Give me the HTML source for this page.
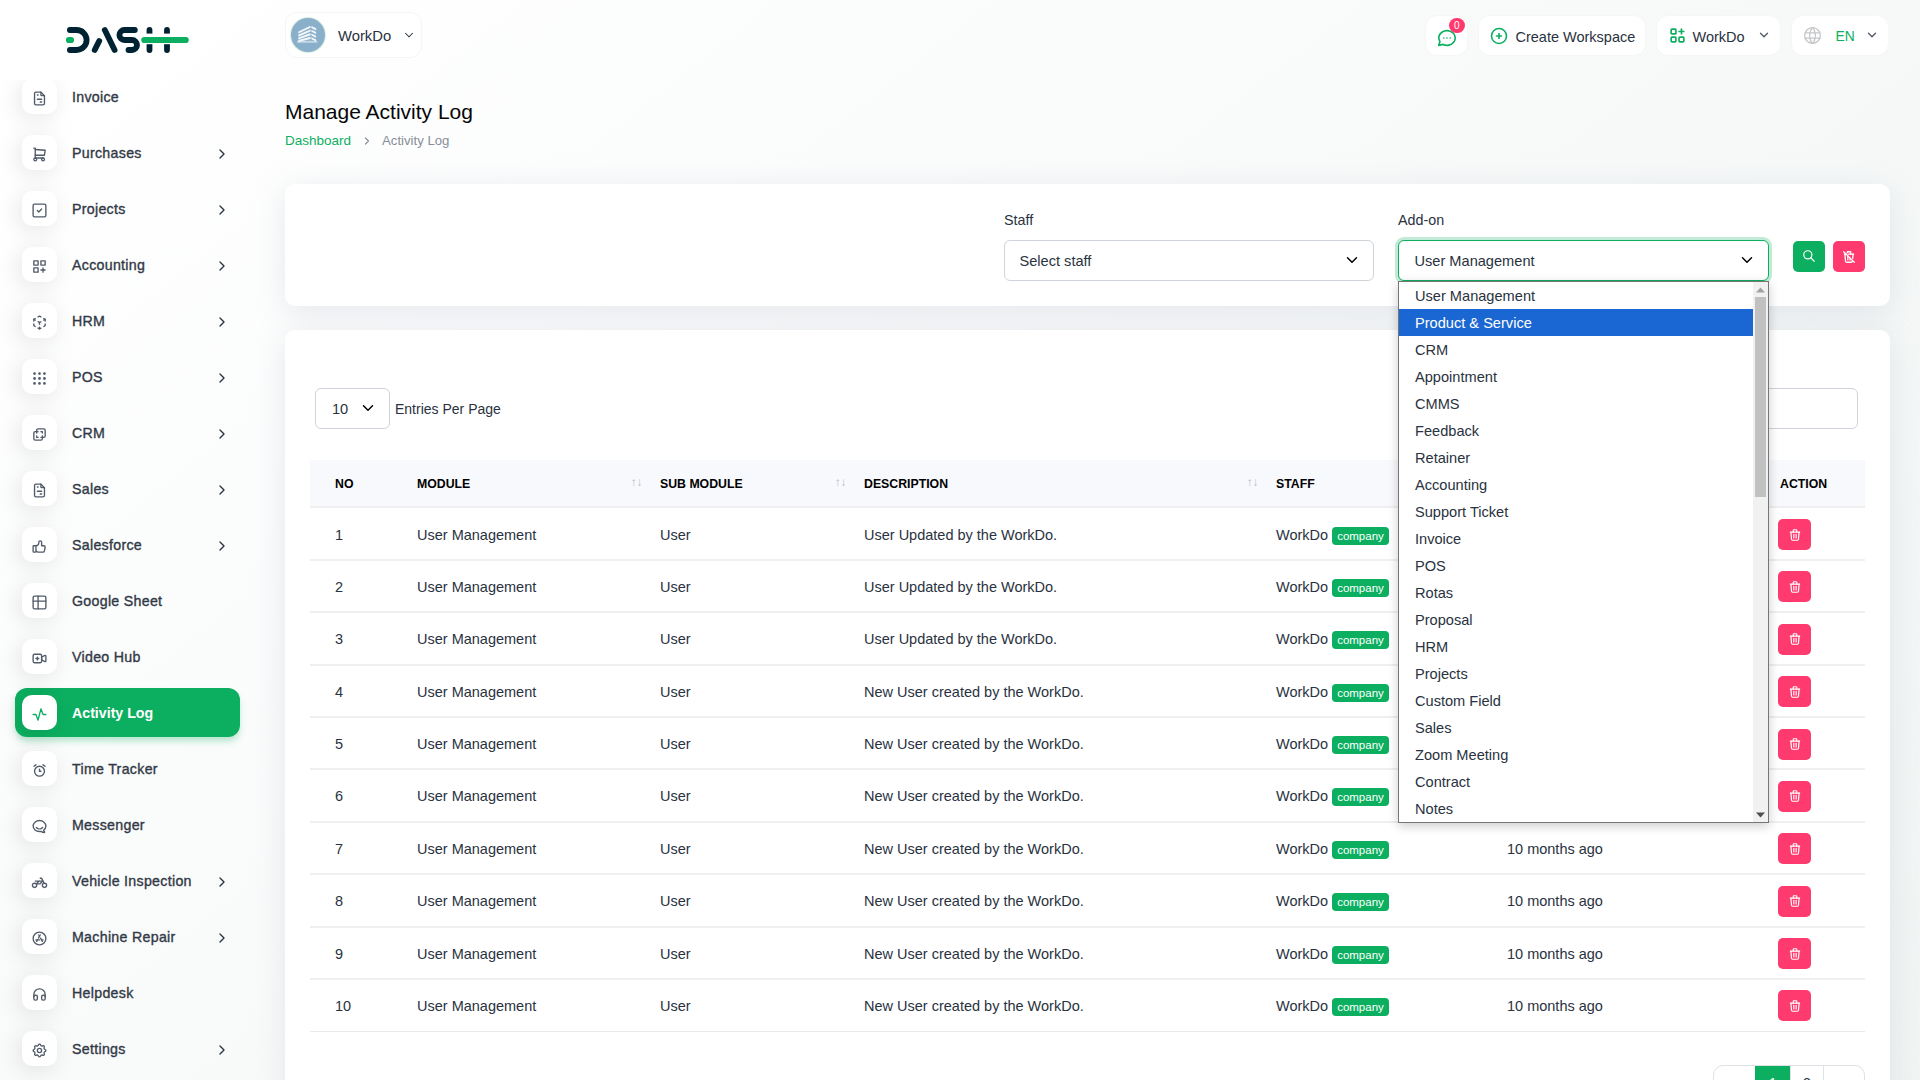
<!DOCTYPE html>
<html><head><meta charset="utf-8"><style>
*{box-sizing:border-box;margin:0;padding:0}
html,body{width:1920px;height:1080px;overflow:hidden}
body{font-family:"Liberation Sans",sans-serif;color:#293240;position:relative;
 background:linear-gradient(141.55deg,rgba(240,244,243,0) 3.46%,#f0f4f3 99.86%),#fff}
.abs{position:absolute}
.side{position:absolute;left:0;top:80px;width:260px;height:1000px;overflow:hidden}
.side .inner{position:absolute;left:0;top:-80px;width:260px;height:1100px}
.micon{position:absolute;left:22px;width:35px;height:35px;background:#fff;border-radius:10px;box-shadow:-3px 4px 23px rgba(0,0,0,0.1);display:flex;align-items:center;justify-content:center;z-index:2;padding-top:3px}
.mtext{position:absolute;left:72px;height:35px;line-height:37px;font-size:14.2px;font-weight:400;letter-spacing:0.3px;-webkit-text-stroke:0.35px #323946;color:#323946;white-space:nowrap;z-index:2}
.act{position:absolute;left:15px;width:225px;height:49px;background:#0CAF60;border-radius:12px;box-shadow:0 5px 7px -1px rgba(12,175,96,0.3)}
.act-t{color:#fff;-webkit-text-stroke:0;font-weight:700;letter-spacing:0}
.chev{position:absolute;left:214px;z-index:2;height:16px}
.hbtn{position:absolute;top:14.5px;height:41px;background:#fff;border-radius:12px;border:1px solid #f5f6f6;white-space:nowrap;font-size:14.5px}
.card{position:absolute;left:285px;width:1605px;background:#fff;border-radius:10px;box-shadow:0 6px 30px rgba(182,186,203,0.3)}
.lbl{position:absolute;font-size:14.3px;color:#293240;margin-top:0.5px}
.sel{position:absolute;height:41px;border:1px solid #ced4da;border-radius:6px;background:#fff;font-size:14.6px}
.thead{position:absolute;left:25px;top:130px;width:1555px;height:48px;background:#f8f9fd;border-bottom:2px solid #efefef}
.th{position:absolute;top:1px;line-height:47px;font-size:12.3px;font-weight:700;color:#000;white-space:nowrap}
.sort{position:absolute;top:16px;font-size:11.5px;color:#b4b8bd;letter-spacing:0px}
.row{position:absolute;left:310px;width:1555px;height:52.38px;border-bottom:2px solid #efefef}
.row.last{border-bottom:1px solid #ebebeb}
.row .c{position:absolute;top:1px;line-height:51px;font-size:14.5px;white-space:nowrap;color:#293240}
.badge{display:inline-block;background:#0CAF60;color:#fff;font-size:11.5px;line-height:18px;height:18px;padding:0 5px;border-radius:4px;vertical-align:0px;position:relative;top:0px}
.del{position:absolute;left:1468px;top:10.5px;width:33px;height:31px;background:#FF3A6E;border-radius:5px;display:flex;align-items:center;justify-content:center}
.dd{position:absolute;left:1398px;top:281px;width:371px;height:542px;background:#fff;border:1px solid #767676;box-shadow:0 3px 10px rgba(0,0,0,0.2);z-index:20;overflow:hidden}
.opt{position:absolute;left:0;width:354px;height:27px;line-height:29px;padding-left:16px;font-size:14.6px;color:#293240;white-space:nowrap}
.opt.hl{background:#1a66d2;color:#fff;border:0;border-radius:0}
.sb{position:absolute;right:0;top:0;width:15px;height:540px;background:#f1f1f1}
.thumb{position:absolute;left:2px;top:15px;width:11px;height:200px;background:#c1c1c1}
</style></head><body>
<svg width="140" height="50" viewBox="60 15 140 50" style="position:absolute;left:60px;top:15px">
<g fill="none" stroke="#002333" stroke-width="5.8" stroke-linecap="round">
<path d="M69.9 30H76.6A10 10 0 0 1 76.6 50H69.9"/>
<path d="M94.7 50L99.2 41"/><path d="M104.8 30L114.6 50"/>
<path d="M134.8 30H124.4A5 5 0 0 0 124.4 40H132A5 5 0 0 1 132 50H128.5"/>
<path d="M149.5 30V50"/><path d="M167 30V50"/>
</g>
<rect x="144" y="33.6" width="28" height="10.6" fill="#fff"/>
<g stroke="#0CAF60" stroke-width="6.2" stroke-linecap="round"><path d="M69 40H71"/><path d="M144.3 40H185.7"/></g>
</svg>
<div class="side"><div class="inner">
<div class="micon" style="top:79.2px"><svg width="17" height="17" viewBox="0 0 24 24" fill="none" stroke="#525b69" stroke-width="1.9" stroke-linecap="round" stroke-linejoin="round" ><path d="M14 3v4a1 1 0 0 0 1 1h4"/><path d="M17 21h-10a2 2 0 0 1 -2 -2v-14a2 2 0 0 1 2 -2h7l5 5v11a2 2 0 0 1 -2 2z"/><path d="M9 7l1 0"/><path d="M9 13l6 0"/><path d="M13 17l2 0"/></svg></div>
<div class="mtext" style="top:79.2px">Invoice</div>
<div class="micon" style="top:135.2px"><svg width="17" height="17" viewBox="0 0 24 24" fill="none" stroke="#525b69" stroke-width="1.9" stroke-linecap="round" stroke-linejoin="round" ><path d="M6 19m-2 0a2 2 0 1 0 4 0a2 2 0 1 0 -4 0"/><path d="M17 19m-2 0a2 2 0 1 0 4 0a2 2 0 1 0 -4 0"/><path d="M17 17h-11v-14h-2"/><path d="M6 5l14 1l-1 7h-13"/></svg></div>
<div class="mtext" style="top:135.2px">Purchases</div>
<div class="chev" style="top:145.7px"><svg width="16" height="16" viewBox="0 0 24 24" fill="none" stroke="#293240" stroke-width="2" stroke-linecap="round" stroke-linejoin="round"><path d="M9 6l6 6l-6 6"/></svg></div>
<div class="micon" style="top:191.2px"><svg width="17" height="17" viewBox="0 0 24 24" fill="none" stroke="#525b69" stroke-width="1.9" stroke-linecap="round" stroke-linejoin="round" ><path d="M3 5a2 2 0 0 1 2 -2h14a2 2 0 0 1 2 2v14a2 2 0 0 1 -2 2h-14a2 2 0 0 1 -2 -2z"/><path d="M9 12l2 2l4 -4"/></svg></div>
<div class="mtext" style="top:191.2px">Projects</div>
<div class="chev" style="top:201.7px"><svg width="16" height="16" viewBox="0 0 24 24" fill="none" stroke="#293240" stroke-width="2" stroke-linecap="round" stroke-linejoin="round"><path d="M9 6l6 6l-6 6"/></svg></div>
<div class="micon" style="top:247.2px"><svg width="17" height="17" viewBox="0 0 24 24" fill="none" stroke="#525b69" stroke-width="1.9" stroke-linecap="round" stroke-linejoin="round" ><path d="M4 4h6v6h-6z"/><path d="M14 4h6v6h-6z"/><path d="M4 14h6v6h-6z"/><path d="M14 17h6m-3 -3v6"/></svg></div>
<div class="mtext" style="top:247.2px">Accounting</div>
<div class="chev" style="top:257.7px"><svg width="16" height="16" viewBox="0 0 24 24" fill="none" stroke="#293240" stroke-width="2" stroke-linecap="round" stroke-linejoin="round"><path d="M9 6l6 6l-6 6"/></svg></div>
<div class="micon" style="top:303.2px"><svg width="17" height="17" viewBox="0 0 24 24" fill="none" stroke="#525b69" stroke-width="1.9" stroke-linecap="round" stroke-linejoin="round" ><path d="M6 17.6l-2 -1.1v-2.5"/><path d="M4 10v-2.5l2 -1.1"/><path d="M10 4.1l2 -1.1l2 1.1"/><path d="M18 6.4l2 1.1v2.5"/><path d="M20 14v2.5l-2 1.12"/><path d="M14 19.9l-2 1.1l-2 -1.1"/><path d="M12 12l2 -1.1"/><path d="M18 8.6l2 -1.1"/><path d="M12 12l0 2.5"/><path d="M12 18.5l0 2.5"/><path d="M12 12l-2 -1.12"/><path d="M6 8.6l-2 -1.1"/></svg></div>
<div class="mtext" style="top:303.2px">HRM</div>
<div class="chev" style="top:313.7px"><svg width="16" height="16" viewBox="0 0 24 24" fill="none" stroke="#293240" stroke-width="2" stroke-linecap="round" stroke-linejoin="round"><path d="M9 6l6 6l-6 6"/></svg></div>
<div class="micon" style="top:359.2px"><svg width="17" height="17" viewBox="0 0 24 24" fill="none" stroke="#525b69" stroke-width="1.9" stroke-linecap="round" stroke-linejoin="round" ><circle cx="5" cy="5" r="1"/><circle cx="12" cy="5" r="1"/><circle cx="19" cy="5" r="1"/><circle cx="5" cy="12" r="1"/><circle cx="12" cy="12" r="1"/><circle cx="19" cy="12" r="1"/><circle cx="5" cy="19" r="1"/><circle cx="12" cy="19" r="1"/><circle cx="19" cy="19" r="1"/></svg></div>
<div class="mtext" style="top:359.2px">POS</div>
<div class="chev" style="top:369.7px"><svg width="16" height="16" viewBox="0 0 24 24" fill="none" stroke="#293240" stroke-width="2" stroke-linecap="round" stroke-linejoin="round"><path d="M9 6l6 6l-6 6"/></svg></div>
<div class="micon" style="top:415.2px"><svg width="17" height="17" viewBox="0 0 24 24" fill="none" stroke="#525b69" stroke-width="1.9" stroke-linecap="round" stroke-linejoin="round" ><path d="M16 16v2a2 2 0 0 1 -2 2h-8a2 2 0 0 1 -2 -2v-8a2 2 0 0 1 2 -2h2v-2a2 2 0 0 1 2 -2h8a2 2 0 0 1 2 2v8a2 2 0 0 1 -2 2h-2"/><path d="M10 8l-2 0l0 2"/><path d="M8 14l0 2l2 0"/><path d="M14 8l2 0l0 2"/><path d="M16 14l0 2l-2 0"/></svg></div>
<div class="mtext" style="top:415.2px">CRM</div>
<div class="chev" style="top:425.7px"><svg width="16" height="16" viewBox="0 0 24 24" fill="none" stroke="#293240" stroke-width="2" stroke-linecap="round" stroke-linejoin="round"><path d="M9 6l6 6l-6 6"/></svg></div>
<div class="micon" style="top:471.2px"><svg width="17" height="17" viewBox="0 0 24 24" fill="none" stroke="#525b69" stroke-width="1.9" stroke-linecap="round" stroke-linejoin="round" ><path d="M14 3v4a1 1 0 0 0 1 1h4"/><path d="M17 21h-10a2 2 0 0 1 -2 -2v-14a2 2 0 0 1 2 -2h7l5 5v11a2 2 0 0 1 -2 2z"/><path d="M9 7l1 0"/><path d="M9 13l6 0"/><path d="M13 17l2 0"/></svg></div>
<div class="mtext" style="top:471.2px">Sales</div>
<div class="chev" style="top:481.7px"><svg width="16" height="16" viewBox="0 0 24 24" fill="none" stroke="#293240" stroke-width="2" stroke-linecap="round" stroke-linejoin="round"><path d="M9 6l6 6l-6 6"/></svg></div>
<div class="micon" style="top:527.2px"><svg width="17" height="17" viewBox="0 0 24 24" fill="none" stroke="#525b69" stroke-width="1.9" stroke-linecap="round" stroke-linejoin="round" ><path d="M7 11v8a1 1 0 0 1 -1 1h-2a1 1 0 0 1 -1 -1v-7a1 1 0 0 1 1 -1h3a4 4 0 0 0 4 -4v-1a2 2 0 0 1 4 0v5h3a2 2 0 0 1 2 2l-1 5a2 3 0 0 1 -2 2h-7a3 3 0 0 1 -3 -3"/></svg></div>
<div class="mtext" style="top:527.2px">Salesforce</div>
<div class="chev" style="top:537.7px"><svg width="16" height="16" viewBox="0 0 24 24" fill="none" stroke="#293240" stroke-width="2" stroke-linecap="round" stroke-linejoin="round"><path d="M9 6l6 6l-6 6"/></svg></div>
<div class="micon" style="top:583.2px"><svg width="17" height="17" viewBox="0 0 24 24" fill="none" stroke="#525b69" stroke-width="1.9" stroke-linecap="round" stroke-linejoin="round" ><path d="M3 5a2 2 0 0 1 2 -2h14a2 2 0 0 1 2 2v14a2 2 0 0 1 -2 2h-14a2 2 0 0 1 -2 -2v-14z"/><path d="M3 10h18"/><path d="M10 3v18"/></svg></div>
<div class="mtext" style="top:583.2px">Google Sheet</div>
<div class="micon" style="top:639.2px"><svg width="17" height="17" viewBox="0 0 24 24" fill="none" stroke="#525b69" stroke-width="1.9" stroke-linecap="round" stroke-linejoin="round" ><path d="M15 10l4.553 -2.276a1 1 0 0 1 1.447 .894v6.764a1 1 0 0 1 -1.447 .894l-4.553 -2.276v-4z"/><path d="M3 8a2 2 0 0 1 2 -2h8a2 2 0 0 1 2 2v8a2 2 0 0 1 -2 2h-8a2 2 0 0 1 -2 -2z"/><path d="M7 12l4 0"/><path d="M9 10l0 4"/></svg></div>
<div class="mtext" style="top:639.2px">Video Hub</div>
<div class="act" style="top:688.0px"></div>
<div class="micon" style="top:695.2px"><svg width="17" height="17" viewBox="0 0 24 24" fill="none" stroke="#0CAF60" stroke-width="1.9" stroke-linecap="round" stroke-linejoin="round" ><path d="M3 12h4l3 8l4 -16l3 8h4"/></svg></div>
<div class="mtext act-t" style="top:695.2px">Activity Log</div>
<div class="micon" style="top:751.2px"><svg width="17" height="17" viewBox="0 0 24 24" fill="none" stroke="#525b69" stroke-width="1.9" stroke-linecap="round" stroke-linejoin="round" ><path d="M12 13m-7 0a7 7 0 1 0 14 0a7 7 0 1 0 -14 0"/><path d="M12 10l0 3l2 0"/><path d="M7 4l-2.75 2"/><path d="M17 4l2.75 2"/></svg></div>
<div class="mtext" style="top:751.2px">Time Tracker</div>
<div class="micon" style="top:807.2px"><svg width="17" height="17" viewBox="0 0 24 24" fill="none" stroke="#525b69" stroke-width="1.9" stroke-linecap="round" stroke-linejoin="round" ><path d="M17.802 17.292s.077 -.055 .2 -.149c1.843 -1.425 3 -3.49 3 -5.789c0 -4.286 -4.03 -7.764 -9 -7.764c-4.97 0 -9 3.478 -9 7.764c0 4.288 4.03 7.646 9 7.646c.424 0 1.12 -.028 2.088 -.084c1.262 .82 3.104 1.493 4.716 1.493c.499 0 .734 -.41 .414 -.828c-.486 -.596 -1.156 -1.551 -1.416 -2.29z"/><path d="M7.5 13.5c2.5 2.5 6.5 2.5 9 0"/></svg></div>
<div class="mtext" style="top:807.2px">Messenger</div>
<div class="micon" style="top:863.2px"><svg width="17" height="17" viewBox="0 0 24 24" fill="none" stroke="#525b69" stroke-width="1.9" stroke-linecap="round" stroke-linejoin="round" ><path d="M5 16m-3 0a3 3 0 1 0 6 0a3 3 0 1 0 -6 0"/><path d="M19 16m-3 0a3 3 0 1 0 6 0a3 3 0 1 0 -6 0"/><path d="M7.5 14h5l4 -4h-10.5m1.5 4l4 -4"/><path d="M13 6h2l1.5 3l2 4"/></svg></div>
<div class="mtext" style="top:863.2px">Vehicle Inspection</div>
<div class="chev" style="top:873.7px"><svg width="16" height="16" viewBox="0 0 24 24" fill="none" stroke="#293240" stroke-width="2" stroke-linecap="round" stroke-linejoin="round"><path d="M9 6l6 6l-6 6"/></svg></div>
<div class="micon" style="top:919.2px"><svg width="17" height="17" viewBox="0 0 24 24" fill="none" stroke="#525b69" stroke-width="1.9" stroke-linecap="round" stroke-linejoin="round" ><path d="M12 12m-9 0a9 9 0 1 0 18 0a9 9 0 1 0 -18 0"/><path d="M8 16l1.106 -1.99m1.4 -2.522l2.494 -4.488"/><path d="M7 14h5m2.9 0h2.1"/><path d="M16 16l-2.51 -4.518m-1.487 -2.677l-1 -1.805"/></svg></div>
<div class="mtext" style="top:919.2px">Machine Repair</div>
<div class="chev" style="top:929.7px"><svg width="16" height="16" viewBox="0 0 24 24" fill="none" stroke="#293240" stroke-width="2" stroke-linecap="round" stroke-linejoin="round"><path d="M9 6l6 6l-6 6"/></svg></div>
<div class="micon" style="top:975.2px"><svg width="17" height="17" viewBox="0 0 24 24" fill="none" stroke="#525b69" stroke-width="1.9" stroke-linecap="round" stroke-linejoin="round" ><path d="M4 15a2 2 0 0 1 2 -2h1a2 2 0 0 1 2 2v3a2 2 0 0 1 -2 2h-1a2 2 0 0 1 -2 -2z"/><path d="M15 15a2 2 0 0 1 2 -2h1a2 2 0 0 1 2 2v3a2 2 0 0 1 -2 2h-1a2 2 0 0 1 -2 -2z"/><path d="M4 15v-3a8 8 0 0 1 16 0v3"/></svg></div>
<div class="mtext" style="top:975.2px">Helpdesk</div>
<div class="micon" style="top:1031.2px"><svg width="17" height="17" viewBox="0 0 24 24" fill="none" stroke="#525b69" stroke-width="1.9" stroke-linecap="round" stroke-linejoin="round" ><path d="M10.325 4.317c.426 -1.756 2.924 -1.756 3.35 0a1.724 1.724 0 0 0 2.573 1.066c1.543 -.94 3.31 .826 2.37 2.37a1.724 1.724 0 0 0 1.065 2.572c1.756 .426 1.756 2.924 0 3.35a1.724 1.724 0 0 0 -1.066 2.573c.94 1.543 -.826 3.31 -2.37 2.37a1.724 1.724 0 0 0 -2.572 1.065c-.426 1.756 -2.924 1.756 -3.35 0a1.724 1.724 0 0 0 -2.573 -1.066c-1.543 .94 -3.31 -.826 -2.37 -2.37a1.724 1.724 0 0 0 -1.065 -2.572c-1.756 -.426 -1.756 -2.924 0 -3.35a1.724 1.724 0 0 0 1.066 -2.573c-.94 -1.543 .826 -3.31 2.37 -2.37c1 .608 2.296 .07 2.572 -1.065z"/><path d="M9 12a3 3 0 1 0 6 0a3 3 0 0 0 -6 0"/></svg></div>
<div class="mtext" style="top:1031.2px">Settings</div>
<div class="chev" style="top:1041.7px"><svg width="16" height="16" viewBox="0 0 24 24" fill="none" stroke="#293240" stroke-width="2" stroke-linecap="round" stroke-linejoin="round"><path d="M9 6l6 6l-6 6"/></svg></div>
</div></div>

<!-- header -->
<div class="hbtn" style="left:285px;top:12px;width:137px;height:46px">
 <div class="abs" style="left:5px;top:5px;width:34px;height:34px;border-radius:50%;background:#8aafcb;box-shadow:0 0 0 1px #d8f0e2"><svg class="abs" style="left:0;top:0" width="34" height="34" viewBox="0 0 34 34"><g fill="#f4f7fa"><path d="M7.4 13.5L19.5 7.7L19.5 9.8L7.4 15.6z"/><path d="M20.4 8.0L25.1 10.3L25.1 12.4L20.4 10.100000000000001z"/><path d="M7.4 16.6L19.5 11.4L19.5 13.5L7.4 18.700000000000003z"/><path d="M20.4 11.700000000000001L25.1 14.0L25.1 16.1L20.4 13.8z"/><path d="M7.4 19.5L19.5 15.1L19.5 17.2L7.4 21.6z"/><path d="M20.4 15.4L25.1 17.7L25.1 19.8L20.4 17.5z"/><path d="M7.4 22.0L19.5 18.8L19.5 20.900000000000002L7.4 24.1z"/><path d="M20.4 19.1L25.1 21.400000000000002L25.1 23.500000000000004L20.4 21.200000000000003z"/><rect x="6" y="22.8" width="20.3" height="2" opacity=".55"/></g></svg></div>
 <div class="abs" style="left:52px;top:1px;line-height:44px;font-size:14.8px;color:#293240">WorkDo</div>
 <div class="abs" style="left:116px;top:15px"><svg width="14" height="14" viewBox="0 0 24 24" fill="none" stroke="#293240" stroke-width="1.8" stroke-linecap="round"><path d="M6 9l6 6l6 -6"/></svg></div>
</div>
<div class="hbtn" style="left:1425px;width:43px">
 <svg class="abs" style="left:10px;top:11.5px" width="22" height="22" viewBox="0 0 24 24" fill="none" stroke="#0CAF60" stroke-width="1.8" stroke-linecap="round" stroke-linejoin="round"><path d="M3 20l1.3 -3.9c-2.324 -3.437 -1.426 -7.872 2.1 -10.374c3.526 -2.501 8.59 -2.296 11.845 .48c3.255 2.777 3.695 7.266 1.029 10.501c-2.666 3.235 -7.615 4.215 -11.574 2.293l-4.7 1"/><path d="M8.5 12h.01"/><path d="M12 12h.01"/><path d="M15.5 12h.01"/></svg>
 <div class="abs" style="left:23px;top:2px;width:15.5px;height:15.5px;border-radius:50%;background:#FF3A6E;color:#fff;font-size:10px;line-height:15px;text-align:center">0</div>
</div>
<div class="hbtn" style="left:1478px;width:168px">
 <svg class="abs" style="left:10px;top:10px" width="20" height="20" viewBox="0 0 24 24" fill="none" stroke="#0CAF60" stroke-width="1.9" stroke-linecap="round" stroke-linejoin="round"><path d="M3 12a9 9 0 1 0 18 0a9 9 0 0 0 -18 0"/><path d="M9 12h6"/><path d="M12 9v6"/></svg>
 <div class="abs" style="left:36.5px;top:2px;line-height:39px;color:#293240">Create Workspace</div></div>
<div class="hbtn" style="left:1656px;width:125px">
 <svg class="abs" style="left:10.5px;top:10.5px" width="19" height="19" viewBox="0 0 24 24" fill="none" stroke="#0CAF60" stroke-width="2.1" stroke-linecap="round" stroke-linejoin="round"><path d="M4 5a1 1 0 0 1 1 -1h4a1 1 0 0 1 1 1v4a1 1 0 0 1 -1 1h-4a1 1 0 0 1 -1 -1z"/><path d="M4 15a1 1 0 0 1 1 -1h4a1 1 0 0 1 1 1v4a1 1 0 0 1 -1 1h-4a1 1 0 0 1 -1 -1z"/><path d="M14 15a1 1 0 0 1 1 -1h4a1 1 0 0 1 1 1v4a1 1 0 0 1 -1 1h-4a1 1 0 0 1 -1 -1z"/><path d="M14 7l6 0"/><path d="M17 4l0 6"/></svg>
 <div class="abs" style="left:35.5px;top:2px;line-height:39px;color:#293240">WorkDo</div>
 <svg class="abs" style="left:99.5px;top:12.5px" width="14" height="14" viewBox="0 0 24 24" fill="none" stroke="#525b69" stroke-width="2.3" stroke-linecap="round"><path d="M6 9l6 6l6 -6"/></svg>
</div>
<div class="hbtn" style="left:1791px;width:98px">
 <svg class="abs" style="left:9.5px;top:9px" width="21" height="21" viewBox="0 0 24 24" fill="none" stroke="#c4c6c8" stroke-width="1.5" stroke-linecap="round" stroke-linejoin="round"><path d="M3 12a9 9 0 1 0 18 0a9 9 0 0 0 -18 0"/><path d="M3.6 9h16.8"/><path d="M3.6 15h16.8"/><path d="M11.5 3a17 17 0 0 0 0 18"/><path d="M12.5 3a17 17 0 0 1 0 18"/></svg>
 <div class="abs" style="left:43.5px;top:1.6px;line-height:39px;color:#0CAF60;font-size:13.8px">EN</div>
 <svg class="abs" style="left:72.5px;top:12.5px" width="14" height="14" viewBox="0 0 24 24" fill="none" stroke="#525b69" stroke-width="2.3" stroke-linecap="round"><path d="M6 9l6 6l6 -6"/></svg>
</div>

<!-- title -->
<div class="abs" style="left:285px;top:97px;font-size:21px;color:#060606;white-space:nowrap;line-height:30px">Manage Activity Log</div>
<div class="abs" style="left:285px;top:132px;font-size:13.5px;line-height:18px;white-space:nowrap"><span style="color:#0CAF60">Dashboard</span></div>
<svg class="abs" style="left:360.5px;top:134.5px" width="12" height="12" viewBox="0 0 24 24" fill="none" stroke="#888e99" stroke-width="2.4" stroke-linecap="round" stroke-linejoin="round"><path d="M9 6l6 6l-6 6"/></svg>
<div class="abs" style="left:382px;top:132px;font-size:13.2px;line-height:18px;white-space:nowrap;color:#888e99">Activity Log</div>

<!-- card 1 -->
<div class="card" style="top:184px;height:122px">
 <div class="lbl" style="left:719px;top:27px">Staff</div>
 <div class="sel" style="left:719px;top:56px;width:370px"><span class="abs" style="left:14.5px;top:1px;line-height:39px">Select staff</span><svg class="abs" style="left:340.6px;top:13.4px" width="12" height="12" viewBox="0 0 16 16" fill="none" stroke="#000" stroke-width="2" stroke-linecap="round" stroke-linejoin="round"><path d="M2 5l6 6l6 -6"/></svg></div>
 <div class="lbl" style="left:1113px;top:27px">Add-on</div>
 <div class="sel" style="left:1113px;top:56px;width:371px;border:1.5px solid #0CAF60;box-shadow:0 0 0 3px rgba(12,175,96,0.25)"><span class="abs" style="left:15.5px;top:1px;line-height:38px">User Management</span><svg class="abs" style="left:341.5px;top:12.9px" width="12" height="12" viewBox="0 0 16 16" fill="none" stroke="#000" stroke-width="2" stroke-linecap="round" stroke-linejoin="round"><path d="M2 5l6 6l6 -6"/></svg></div>
 <div class="abs" style="left:1508px;top:57px;width:32px;height:31px;background:#0CAF60;border-radius:5px"><svg class="abs" style="left:9px;top:7.5px" width="14" height="14" viewBox="0 0 24 24" fill="none" stroke="#fff" stroke-width="2" stroke-linecap="round"><path d="M10 10m-7 0a7 7 0 1 0 14 0a7 7 0 1 0 -14 0"/><path d="M21 21l-6 -6"/></svg></div>
 <div class="abs" style="left:1548px;top:57px;width:32px;height:31px;background:#FF3A6E;border-radius:5px"><svg class="abs" style="left:9px;top:8.5px" width="14" height="14" viewBox="0 0 24 24" fill="none" stroke="#fff" stroke-width="2.2" stroke-linecap="round" stroke-linejoin="round"><path d="M3 3l18 18"/><path d="M4 7h3m4 0h9"/><path d="M10 11l0 6"/><path d="M14 14l0 3"/><path d="M5 7l1 12a2 2 0 0 0 2 2h8a2 2 0 0 0 2 -2l.077 -.923"/><path d="M18.384 14.373l.616 -7.373"/><path d="M9 5v-1a1 1 0 0 1 1 -1h4a1 1 0 0 1 1 1v3"/></svg></div>
</div>

<!-- card 2 -->
<div class="card" style="top:330px;height:800px">
 <div class="sel" style="left:30px;top:58px;width:75px;height:41px"><span class="abs" style="left:16px;top:1px;line-height:39px">10</span><svg class="abs" style="left:46px;top:13.4px" width="12" height="12" viewBox="0 0 16 16" fill="none" stroke="#000" stroke-width="2" stroke-linecap="round" stroke-linejoin="round"><path d="M2 5l6 6l6 -6"/></svg></div>
 <div class="abs" style="left:110px;top:59px;line-height:41px;font-size:14px;white-space:nowrap">Entries Per Page</div>
 <div class="sel" style="left:1270px;top:58px;width:303px;height:41px"></div>
 <div class="thead">
  <span class="th" style="left:25px">NO</span>
  <span class="th" style="left:107px">MODULE</span><span class="sort" style="left:321px">&#8593;&#8595;</span>
  <span class="th" style="left:350px">SUB MODULE</span><span class="sort" style="left:525px">&#8593;&#8595;</span>
  <span class="th" style="left:554px">DESCRIPTION</span><span class="sort" style="left:937px">&#8593;&#8595;</span>
  <span class="th" style="left:966px">STAFF</span>
  <span class="th" style="left:1197px">TIME</span>
  <span class="th" style="left:1470px">ACTION</span>
 </div>
 <div class="abs" style="left:1428px;top:735px;width:152px;height:40px;border:1px solid #dee2e6;border-radius:10px;overflow:hidden">
  <div class="abs" style="left:41px;top:-1px;width:35px;height:42px;background:#0CAF60"></div><div class="abs" style="left:76px;top:0;width:1px;height:40px;background:#dee2e6"></div><div class="abs" style="left:109px;top:0;width:1px;height:40px;background:#dee2e6"></div><svg class="abs" style="left:17px;top:12px" width="12" height="12" viewBox="0 0 24 24" fill="none" stroke="#293240" stroke-width="2.2" stroke-linecap="round"><path d="M15 6l-6 6l6 6"/></svg><div class="abs" style="left:55px;top:9px;font-size:14px;color:#fff">1</div><div class="abs" style="left:89px;top:9px;font-size:14px;color:#293240">2</div><svg class="abs" style="left:123px;top:12px" width="12" height="12" viewBox="0 0 24 24" fill="none" stroke="#293240" stroke-width="2.2" stroke-linecap="round"><path d="M9 6l6 6l-6 6"/></svg>
 </div>
</div>
<div class="row" style="top:508.55px">
<span class="c" style="left:25px">1</span><span class="c" style="left:107px">User Management</span><span class="c" style="left:350px">User</span><span class="c" style="left:554px">User Updated by the WorkDo.</span>
<span class="c" style="left:966px">WorkDo <span class="badge">company</span></span><span class="c" style="left:1197px">10 months ago</span>
<span class="del"><svg width="14" height="14" viewBox="0 0 24 24" fill="none" stroke="#fff" stroke-width="2" stroke-linecap="round" stroke-linejoin="round"><path d="M4 7l16 0"/><path d="M10 11l0 6"/><path d="M14 11l0 6"/><path d="M5 7l1 12a2 2 0 0 0 2 2h8a2 2 0 0 0 2 -2l1 -12"/><path d="M9 7v-3a1 1 0 0 1 1 -1h4a1 1 0 0 1 1 1v3"/></svg></span></div>
<div class="row" style="top:560.93px">
<span class="c" style="left:25px">2</span><span class="c" style="left:107px">User Management</span><span class="c" style="left:350px">User</span><span class="c" style="left:554px">User Updated by the WorkDo.</span>
<span class="c" style="left:966px">WorkDo <span class="badge">company</span></span><span class="c" style="left:1197px">10 months ago</span>
<span class="del"><svg width="14" height="14" viewBox="0 0 24 24" fill="none" stroke="#fff" stroke-width="2" stroke-linecap="round" stroke-linejoin="round"><path d="M4 7l16 0"/><path d="M10 11l0 6"/><path d="M14 11l0 6"/><path d="M5 7l1 12a2 2 0 0 0 2 2h8a2 2 0 0 0 2 -2l1 -12"/><path d="M9 7v-3a1 1 0 0 1 1 -1h4a1 1 0 0 1 1 1v3"/></svg></span></div>
<div class="row" style="top:613.31px">
<span class="c" style="left:25px">3</span><span class="c" style="left:107px">User Management</span><span class="c" style="left:350px">User</span><span class="c" style="left:554px">User Updated by the WorkDo.</span>
<span class="c" style="left:966px">WorkDo <span class="badge">company</span></span><span class="c" style="left:1197px">10 months ago</span>
<span class="del"><svg width="14" height="14" viewBox="0 0 24 24" fill="none" stroke="#fff" stroke-width="2" stroke-linecap="round" stroke-linejoin="round"><path d="M4 7l16 0"/><path d="M10 11l0 6"/><path d="M14 11l0 6"/><path d="M5 7l1 12a2 2 0 0 0 2 2h8a2 2 0 0 0 2 -2l1 -12"/><path d="M9 7v-3a1 1 0 0 1 1 -1h4a1 1 0 0 1 1 1v3"/></svg></span></div>
<div class="row" style="top:665.69px">
<span class="c" style="left:25px">4</span><span class="c" style="left:107px">User Management</span><span class="c" style="left:350px">User</span><span class="c" style="left:554px">New User created by the WorkDo.</span>
<span class="c" style="left:966px">WorkDo <span class="badge">company</span></span><span class="c" style="left:1197px">10 months ago</span>
<span class="del"><svg width="14" height="14" viewBox="0 0 24 24" fill="none" stroke="#fff" stroke-width="2" stroke-linecap="round" stroke-linejoin="round"><path d="M4 7l16 0"/><path d="M10 11l0 6"/><path d="M14 11l0 6"/><path d="M5 7l1 12a2 2 0 0 0 2 2h8a2 2 0 0 0 2 -2l1 -12"/><path d="M9 7v-3a1 1 0 0 1 1 -1h4a1 1 0 0 1 1 1v3"/></svg></span></div>
<div class="row" style="top:718.07px">
<span class="c" style="left:25px">5</span><span class="c" style="left:107px">User Management</span><span class="c" style="left:350px">User</span><span class="c" style="left:554px">New User created by the WorkDo.</span>
<span class="c" style="left:966px">WorkDo <span class="badge">company</span></span><span class="c" style="left:1197px">10 months ago</span>
<span class="del"><svg width="14" height="14" viewBox="0 0 24 24" fill="none" stroke="#fff" stroke-width="2" stroke-linecap="round" stroke-linejoin="round"><path d="M4 7l16 0"/><path d="M10 11l0 6"/><path d="M14 11l0 6"/><path d="M5 7l1 12a2 2 0 0 0 2 2h8a2 2 0 0 0 2 -2l1 -12"/><path d="M9 7v-3a1 1 0 0 1 1 -1h4a1 1 0 0 1 1 1v3"/></svg></span></div>
<div class="row" style="top:770.45px">
<span class="c" style="left:25px">6</span><span class="c" style="left:107px">User Management</span><span class="c" style="left:350px">User</span><span class="c" style="left:554px">New User created by the WorkDo.</span>
<span class="c" style="left:966px">WorkDo <span class="badge">company</span></span><span class="c" style="left:1197px">10 months ago</span>
<span class="del"><svg width="14" height="14" viewBox="0 0 24 24" fill="none" stroke="#fff" stroke-width="2" stroke-linecap="round" stroke-linejoin="round"><path d="M4 7l16 0"/><path d="M10 11l0 6"/><path d="M14 11l0 6"/><path d="M5 7l1 12a2 2 0 0 0 2 2h8a2 2 0 0 0 2 -2l1 -12"/><path d="M9 7v-3a1 1 0 0 1 1 -1h4a1 1 0 0 1 1 1v3"/></svg></span></div>
<div class="row" style="top:822.83px">
<span class="c" style="left:25px">7</span><span class="c" style="left:107px">User Management</span><span class="c" style="left:350px">User</span><span class="c" style="left:554px">New User created by the WorkDo.</span>
<span class="c" style="left:966px">WorkDo <span class="badge">company</span></span><span class="c" style="left:1197px">10 months ago</span>
<span class="del"><svg width="14" height="14" viewBox="0 0 24 24" fill="none" stroke="#fff" stroke-width="2" stroke-linecap="round" stroke-linejoin="round"><path d="M4 7l16 0"/><path d="M10 11l0 6"/><path d="M14 11l0 6"/><path d="M5 7l1 12a2 2 0 0 0 2 2h8a2 2 0 0 0 2 -2l1 -12"/><path d="M9 7v-3a1 1 0 0 1 1 -1h4a1 1 0 0 1 1 1v3"/></svg></span></div>
<div class="row" style="top:875.21px">
<span class="c" style="left:25px">8</span><span class="c" style="left:107px">User Management</span><span class="c" style="left:350px">User</span><span class="c" style="left:554px">New User created by the WorkDo.</span>
<span class="c" style="left:966px">WorkDo <span class="badge">company</span></span><span class="c" style="left:1197px">10 months ago</span>
<span class="del"><svg width="14" height="14" viewBox="0 0 24 24" fill="none" stroke="#fff" stroke-width="2" stroke-linecap="round" stroke-linejoin="round"><path d="M4 7l16 0"/><path d="M10 11l0 6"/><path d="M14 11l0 6"/><path d="M5 7l1 12a2 2 0 0 0 2 2h8a2 2 0 0 0 2 -2l1 -12"/><path d="M9 7v-3a1 1 0 0 1 1 -1h4a1 1 0 0 1 1 1v3"/></svg></span></div>
<div class="row" style="top:927.59px">
<span class="c" style="left:25px">9</span><span class="c" style="left:107px">User Management</span><span class="c" style="left:350px">User</span><span class="c" style="left:554px">New User created by the WorkDo.</span>
<span class="c" style="left:966px">WorkDo <span class="badge">company</span></span><span class="c" style="left:1197px">10 months ago</span>
<span class="del"><svg width="14" height="14" viewBox="0 0 24 24" fill="none" stroke="#fff" stroke-width="2" stroke-linecap="round" stroke-linejoin="round"><path d="M4 7l16 0"/><path d="M10 11l0 6"/><path d="M14 11l0 6"/><path d="M5 7l1 12a2 2 0 0 0 2 2h8a2 2 0 0 0 2 -2l1 -12"/><path d="M9 7v-3a1 1 0 0 1 1 -1h4a1 1 0 0 1 1 1v3"/></svg></span></div>
<div class="row last" style="top:979.97px">
<span class="c" style="left:25px">10</span><span class="c" style="left:107px">User Management</span><span class="c" style="left:350px">User</span><span class="c" style="left:554px">New User created by the WorkDo.</span>
<span class="c" style="left:966px">WorkDo <span class="badge">company</span></span><span class="c" style="left:1197px">10 months ago</span>
<span class="del"><svg width="14" height="14" viewBox="0 0 24 24" fill="none" stroke="#fff" stroke-width="2" stroke-linecap="round" stroke-linejoin="round"><path d="M4 7l16 0"/><path d="M10 11l0 6"/><path d="M14 11l0 6"/><path d="M5 7l1 12a2 2 0 0 0 2 2h8a2 2 0 0 0 2 -2l1 -12"/><path d="M9 7v-3a1 1 0 0 1 1 -1h4a1 1 0 0 1 1 1v3"/></svg></span></div>

<!-- dropdown -->
<div class="dd">
<div class="opt" style="top:0.3px">User Management</div>
<div class="opt hl" style="top:27.3px">Product &amp; Service</div>
<div class="opt" style="top:54.3px">CRM</div>
<div class="opt" style="top:81.3px">Appointment</div>
<div class="opt" style="top:108.3px">CMMS</div>
<div class="opt" style="top:135.3px">Feedback</div>
<div class="opt" style="top:162.3px">Retainer</div>
<div class="opt" style="top:189.3px">Accounting</div>
<div class="opt" style="top:216.3px">Support Ticket</div>
<div class="opt" style="top:243.3px">Invoice</div>
<div class="opt" style="top:270.3px">POS</div>
<div class="opt" style="top:297.3px">Rotas</div>
<div class="opt" style="top:324.3px">Proposal</div>
<div class="opt" style="top:351.3px">HRM</div>
<div class="opt" style="top:378.3px">Projects</div>
<div class="opt" style="top:405.3px">Custom Field</div>
<div class="opt" style="top:432.3px">Sales</div>
<div class="opt" style="top:459.3px">Zoom Meeting</div>
<div class="opt" style="top:486.3px">Contract</div>
<div class="opt" style="top:513.3px">Notes</div>
<div class="sb"><div class="thumb"></div><svg class="abs" style="left:3px;top:5px" width="9" height="6" viewBox="0 0 9 6"><path d="M0 5.5L4.5 0.5L9 5.5z" fill="#a3a3a3"/></svg><svg class="abs" style="left:3px;top:530px" width="9" height="6" viewBox="0 0 9 6"><path d="M0 0.5L4.5 5.5L9 0.5z" fill="#505050"/></svg></div>
</div>
</body></html>
